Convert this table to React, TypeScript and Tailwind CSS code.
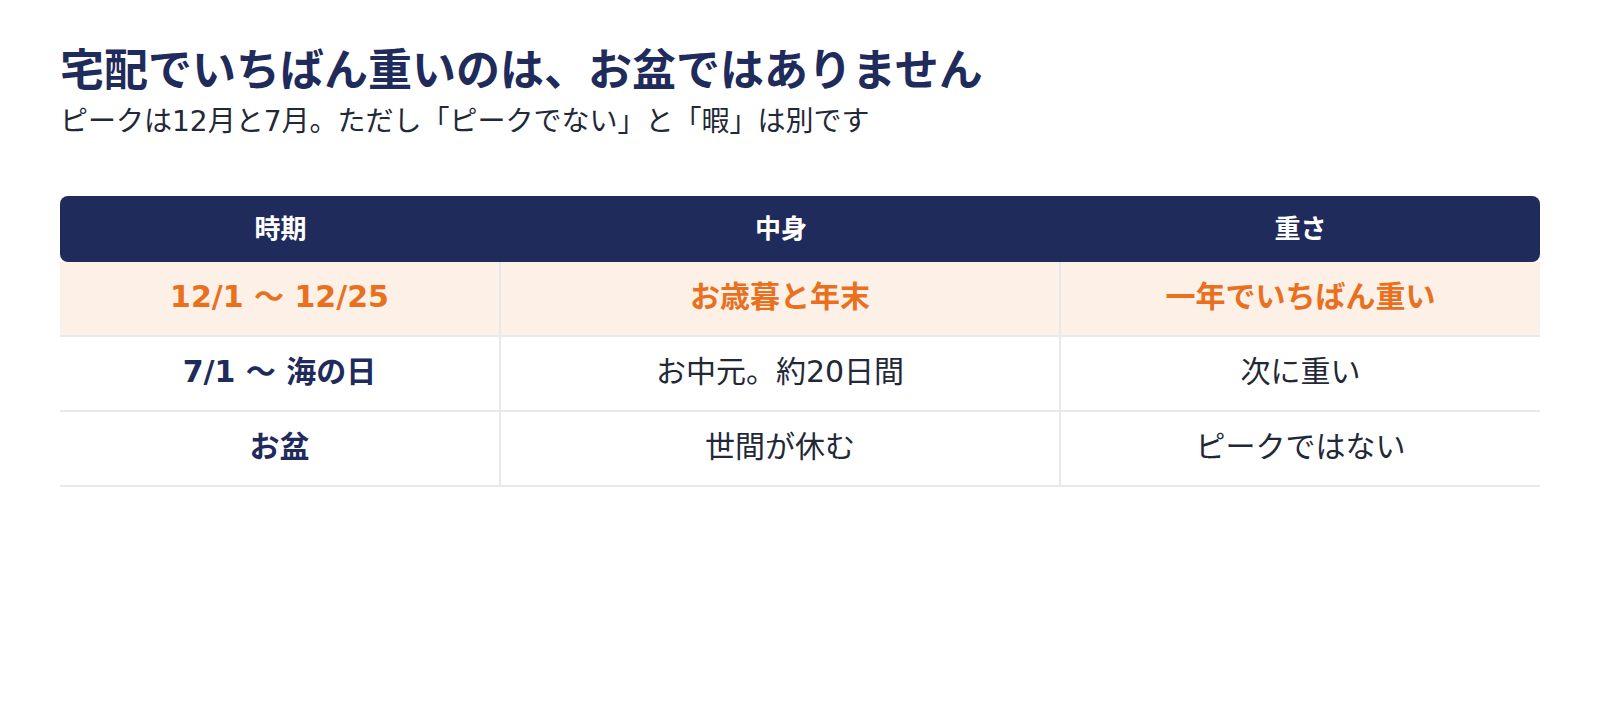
const rows = [
  { period: '12/1 〜 12/25', content: 'お歳暮と年末', weight: '一年でいちばん重い', peak: true },
  { period: '7/1 〜 海の日', content: 'お中元。約20日間', weight: '次に重い', peak: false },
  { period: 'お盆', content: '世間が休む', weight: 'ピークではない', peak: false },
];

export default function App() {
  return (
    <div
      className="min-h-screen bg-white px-[60px] pt-[43px]"
      style={{ fontFamily: '"DejaVu Sans", "Noto Sans CJK JP", sans-serif' }}
    >
      <h1 className="text-[44px] font-bold leading-[56px] text-[#1f2b5a]">
        宅配でいちばん重いのは、お盆ではありません
      </h1>
      <p className="mt-[4px] text-[28px] leading-[38px] text-[#222836]">
        ピークは12月と7月。ただし「ピークでない」と「暇」は別です
      </p>

      <div className="mt-[55px] w-[1480px]">
        <div className="grid h-[66px] grid-cols-[441px_560px_479px] items-center rounded-lg bg-[#1f2b5a] text-[26px] font-bold text-white">
          <div className="text-center">時期</div>
          <div className="text-center">中身</div>
          <div className="text-center">重さ</div>
        </div>
        {rows.map((r) => (
          <div
            key={r.period}
            className={`grid h-[75px] grid-cols-[441px_560px_479px] border-b-2 border-[#e8e9ee] text-[30px] ${
              r.peak ? 'bg-[#fdf0e6] font-bold text-[#e8701f]' : 'text-[#222836]'
            }`}
          >
            <div className={`flex items-center justify-center border-r-2 border-[#e8e9ee] pb-[4px] font-bold ${r.peak ? '' : 'text-[#1f2b5a]'}`}>
              {r.period}
            </div>
            <div className="flex items-center justify-center border-r-2 border-[#e8e9ee] pb-[4px]">{r.content}</div>
            <div className="flex items-center justify-center pb-[4px]">{r.weight}</div>
          </div>
        ))}
      </div>
    </div>
  );
}
